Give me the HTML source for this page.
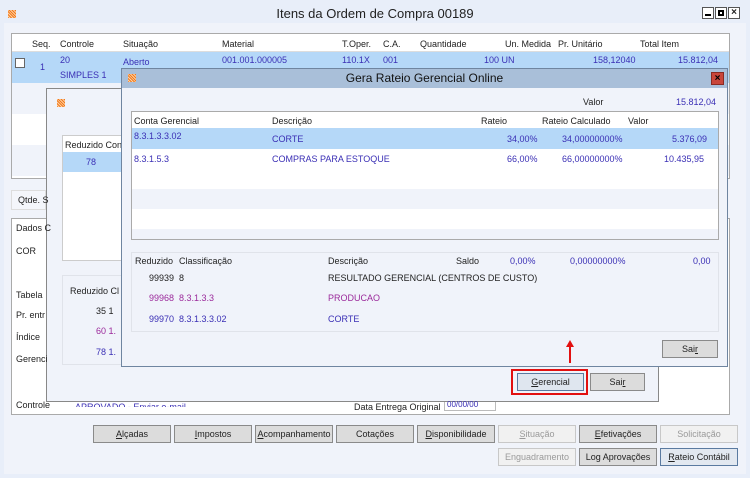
<!DOCTYPE html>
<html><head><meta charset="utf-8"><style>
*{margin:0;padding:0;box-sizing:border-box}
body{width:750px;height:478px;overflow:hidden;background:#e8eef9;font-family:"Liberation Sans",sans-serif;font-size:9px;color:#222;position:relative}
.a{position:absolute;white-space:nowrap}
.b{color:#3a2fb5}
.p{color:#9b2a9b}
.btn{position:absolute;height:18px;background:#dcdcdc;border:1px solid #8a8a8a;text-align:center;line-height:16px;font-size:9px;color:#222}
.dis{background:#f1f1f1;border-color:#c8c8c8;color:#9a9a9a}
.ico{position:absolute;width:8px;height:8px;background:repeating-linear-gradient(45deg,#f07a20 0 1px,#ffd0a0 1px 2px)}
</style></head><body>
<div class="ico" style="left:8px;top:10px"></div>
<div class="a" style="left:0;width:750px;text-align:center;top:6px;font-size:13px;color:#222">Itens da Ordem de Compra 00189</div>
<div class="a" style="left:702px;top:7px;width:12px;height:12px;border:1px solid #555;background:#fff"><div style="position:absolute;left:2px;top:6px;width:6px;height:2px;background:#000"></div></div>
<div class="a" style="left:715px;top:7px;width:12px;height:12px;border:1px solid #555;background:#fff"><div style="position:absolute;left:2px;top:2px;width:6px;height:6px;border:2px solid #000"></div></div>
<div class="a" style="left:728px;top:7px;width:12px;height:12px;border:1px solid #555;background:#fff;font-size:10px;font-weight:bold;text-align:center;line-height:10px">×</div>
<div class="a" style="left:4px;top:23px;width:742px;height:451px;background:#f0f3fa"></div>
<!-- main grid -->
<div class="a" style="left:11px;top:33px;width:719px;height:146px;background:#fff;border:1px solid #aaa"></div>
<div class="a" style="left:12px;top:34px;width:717px;height:18px;background:#fff;border-bottom:1px solid #ddd"></div>
<div class="a" style="left:12px;top:52px;width:717px;height:31px;background:#b5d8f8"></div>
<div class="a" style="left:12px;top:83px;width:717px;height:31px;background:#f0f3fa"></div>
<div class="a" style="left:12px;top:145px;width:717px;height:31px;background:#f0f3fa"></div>
<div class="a" style="left:32px;top:39px">Seq.</div><div class="a" style="left:60px;top:39px">Controle</div><div class="a" style="left:123px;top:39px">Situação</div><div class="a" style="left:222px;top:39px">Material</div><div class="a" style="left:342px;top:39px">T.Oper.</div><div class="a" style="left:383px;top:39px">C.A.</div><div class="a" style="left:420px;top:39px">Quantidade</div><div class="a" style="left:505px;top:39px">Un. Medida</div><div class="a" style="left:558px;top:39px">Pr. Unitário</div><div class="a" style="left:640px;top:39px">Total Item</div>
<div class="a" style="left:15px;top:58px;width:10px;height:10px;border:1px solid #666;background:#fff"></div>
<div class="a b" style="left:40px;top:62px">1</div><div class="a b" style="left:60px;top:55px">20</div><div class="a b" style="left:60px;top:70px">SIMPLES 1</div><div class="a b" style="left:123px;top:57px">Aberto</div><div class="a b" style="left:222px;top:55px">001.001.000005</div><div class="a b" style="left:342px;top:55px">110.1X</div><div class="a b" style="left:383px;top:55px">001</div><div class="a b" style="left:484px;top:55px">100 UN</div><div class="a b" style="left:593px;top:55px">158,12040</div>
<!-- dialog 2 -->
<div class="a" style="left:46px;top:88px;width:613px;height:314px;background:#f0f3fa;border:1px solid #888"></div>
<div class="ico" style="left:57px;top:99px"></div>
<div class="a" style="left:62px;top:135px;width:80px;height:126px;background:#fff;border:1px solid #ccc"></div>
<div class="a" style="left:65px;top:140px">Reduzido Conta</div>
<div class="a" style="left:63px;top:152px;width:60px;height:20px;background:#b5d8f8"></div>
<div class="a b" style="left:86px;top:157px">78</div>
<div class="a" style="left:62px;top:275px;width:80px;height:90px;border:1px solid #e0e3ea"></div>
<div class="a" style="left:70px;top:286px">Reduzido Cl</div>
<div class="a" style="left:96px;top:306px">35 1</div><div class="a p" style="left:96px;top:326px">60 1.</div><div class="a b" style="left:96px;top:347px">78 1.</div>
<div class="a" style="left:11px;top:190px;width:35px;height:20px;border:1px solid #ddd;background:#f4f6fb"></div>
<div class="a" style="left:18px;top:195px">Qtde. S</div>
<div class="a" style="left:11px;top:218px;width:35px;height:197px;background:#fff;border:1px solid #aaa;border-right:none"></div>
<div class="a" style="left:46px;top:402px;width:684px;height:13px;background:#fff;border-bottom:1px solid #aaa"></div>
<div class="a" style="left:659px;top:218px;width:71px;height:197px;background:#fff;border:1px solid #aaa;border-left:none"></div>
<div class="a" style="left:16px;top:223px">Dados C</div><div class="a" style="left:16px;top:246px">COR</div><div class="a" style="left:16px;top:290px">Tabela</div><div class="a" style="left:16px;top:310px">Pr. entr</div><div class="a" style="left:16px;top:332px">Índice</div><div class="a" style="left:16px;top:354px">Gerenci</div><div class="a" style="left:16px;top:400px">Controle</div>
<div class="a b" style="left:75px;top:401px;height:5px;overflow:hidden;top:402px">APROVADO - Enviar e-mail</div>
<div class="a" style="left:354px;top:402px">Data Entrega Original</div>
<div class="a b" style="left:444px;top:402px;width:52px;height:9px;border:1px solid #bbb;border-top:none;background:#fff;font-size:8px;line-height:6px;padding-left:2px">00/00/00</div>
<!-- buttons -->
<div class="btn" style="left:93px;top:425px;width:78px"><u>A</u>lçadas</div>
<div class="btn" style="left:174px;top:425px;width:78px"><u>I</u>mpostos</div>
<div class="btn" style="left:255px;top:425px;width:78px"><u>A</u>companhamento</div>
<div class="btn" style="left:336px;top:425px;width:78px">Cotações</div>
<div class="btn" style="left:417px;top:425px;width:78px"><u>D</u>isponibilidade</div>
<div class="btn dis" style="left:498px;top:425px;width:78px"><u>S</u>ituação</div>
<div class="btn" style="left:579px;top:425px;width:78px"><u>E</u>fetivações</div>
<div class="btn dis" style="left:660px;top:425px;width:78px">Solicitação</div>
<div class="btn dis" style="left:498px;top:448px;width:78px">Enguadramento</div>
<div class="btn" style="left:579px;top:448px;width:78px">Log Aprovações</div>
<div class="btn" style="left:660px;top:448px;width:78px;border-color:#5a7aa0;background:#e2e8f0"><u>R</u>ateio Contábil</div>
<div class="btn" style="left:517px;top:373px;width:67px;border-color:#5a7aa0;background:#dfe6ef"><u>G</u>erencial</div>
<div class="btn" style="left:590px;top:373px;width:55px">Sai<u>r</u></div>
<div class="a" style="left:511px;top:369px;width:77px;height:26px;border:2px solid #e21010"></div>
<!-- dialog main -->
<div class="a" style="left:121px;top:68px;width:607px;height:299px;background:#f0f3fa;border:1px solid #6f85a0"></div>
<div class="a" style="left:122px;top:69px;width:605px;height:19px;background:#a9bfd9"></div>
<div class="ico" style="left:128px;top:74px"></div>
<div class="a" style="left:122px;top:71px;width:605px;text-align:center;font-size:12px;color:#111">Gera Rateio Gerencial Online</div>
<div class="a" style="left:711px;top:72px;width:13px;height:13px;background:#c9453a;border:1px solid #8a2a22;color:#000;font-weight:bold;font-size:10px;text-align:center;line-height:11px">×</div>
<div class="a" style="left:728px;top:55px" ></div>
<div class="a b" style="left:678px;top:55px">15.812,04</div>
<div class="a" style="left:583px;top:97px">Valor</div><div class="a b" style="left:676px;top:97px">15.812,04</div>
<div class="a" style="left:131px;top:111px;width:588px;height:129px;background:#fff;border:1px solid #aaa"></div>
<div class="a" style="left:132px;top:128px;width:586px;height:21px;background:#b5d8f8"></div>
<div class="a" style="left:132px;top:189px;width:586px;height:20px;background:#f0f3fa"></div>
<div class="a" style="left:132px;top:229px;width:586px;height:10px;background:#f0f3fa"></div>
<div class="a" style="left:134px;top:116px">Conta Gerencial</div><div class="a" style="left:272px;top:116px">Descrição</div><div class="a" style="left:481px;top:116px">Rateio</div><div class="a" style="left:542px;top:116px">Rateio Calculado</div><div class="a" style="left:628px;top:116px">Valor</div>
<div class="a b" style="left:134px;top:131px">8.3.1.3.3.02</div><div class="a b" style="left:272px;top:134px">CORTE</div><div class="a b" style="left:507px;top:134px">34,00%</div><div class="a b" style="left:562px;top:134px">34,00000000%</div><div class="a b" style="left:672px;top:134px">5.376,09</div>
<div class="a b" style="left:134px;top:154px">8.3.1.5.3</div><div class="a b" style="left:272px;top:154px">COMPRAS PARA ESTOQUE</div><div class="a b" style="left:507px;top:154px">66,00%</div><div class="a b" style="left:562px;top:154px">66,00000000%</div><div class="a b" style="left:664px;top:154px">10.435,95</div>
<div class="a" style="left:131px;top:252px;width:588px;height:80px;border:1px solid #e0e3ea"></div>
<div class="a" style="left:135px;top:256px">Reduzido</div><div class="a" style="left:179px;top:256px">Classificação</div><div class="a" style="left:328px;top:256px">Descrição</div><div class="a" style="left:456px;top:256px">Saldo</div><div class="a b" style="left:510px;top:256px">0,00%</div><div class="a b" style="left:570px;top:256px">0,00000000%</div><div class="a b" style="left:693px;top:256px">0,00</div>
<div class="a" style="left:149px;top:273px">99939</div><div class="a" style="left:179px;top:273px">8</div><div class="a" style="left:328px;top:273px">RESULTADO GERENCIAL (CENTROS DE CUSTO)</div>
<div class="a p" style="left:149px;top:293px">99968</div><div class="a p" style="left:179px;top:293px">8.3.1.3.3</div><div class="a p" style="left:328px;top:293px">PRODUCAO</div>
<div class="a b" style="left:149px;top:314px">99970</div><div class="a b" style="left:179px;top:314px">8.3.1.3.3.02</div><div class="a b" style="left:328px;top:314px">CORTE</div>
<div class="btn" style="left:662px;top:340px;width:56px">Sai<u>r</u></div>
<svg class="a" style="left:564px;top:338px" width="12" height="26"><path d="M6 25V6" stroke="#e21010" stroke-width="2"/><path d="M2 9L6 2L10 9Z" fill="#e21010"/></svg>
</body></html>
